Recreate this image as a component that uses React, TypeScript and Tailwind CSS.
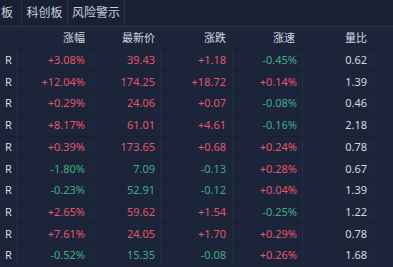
const rows = [
  ["+3.08%", "39.43", "+1.18", "-0.45%", "0.62"],
  ["+12.04%", "174.25", "+18.72", "+0.14%", "1.39"],
  ["+0.29%", "24.06", "+0.07", "-0.08%", "0.46"],
  ["+8.17%", "61.01", "+4.61", "-0.16%", "2.18"],
  ["+0.39%", "173.65", "+0.68", "+0.24%", "0.78"],
  ["-1.80%", "7.09", "-0.13", "+0.28%", "0.67"],
  ["-0.23%", "52.91", "-0.12", "+0.04%", "1.39"],
  ["+2.65%", "59.62", "+1.54", "-0.25%", "1.22"],
  ["+7.61%", "24.05", "+1.70", "+0.29%", "0.78"],
  ["-0.52%", "15.35", "-0.08", "+0.26%", "1.68"],
];

const color = (v: string) => (v.startsWith("-") ? "text-[#3fae86]" : "text-[#e5566f]");

const cols = "grid grid-cols-[16px_74px_70px_72px_70px_71px_1fr]";

export default function App() {
  return (
    <div
      className="w-[393px] h-[267px] overflow-hidden bg-[#1b2438] text-[11px]"
      style={{ fontFamily: '"Noto Sans", "Noto Sans CJK SC", sans-serif' }}
    >
      <div className="flex h-[27px] bg-[#182133] border-b border-[#2a3449] text-[12px] text-[#c9cfda]">
        <div className="w-[22px] flex items-center border-r border-[#2a3449] pl-[1px]">板</div>
        <div className="w-[46px] flex items-center justify-center border-r border-[#2a3449]">科创板</div>
        <div className="w-[57px] flex items-center justify-center border-r border-[#2a3449]">风险警示</div>
        <div className="flex-1" />
      </div>
      <div className={`${cols} h-[22px] items-center text-[#d4d9e2]`}>
        <div />
        <div className="text-right pr-[5px]">涨幅</div>
        <div className="text-right pr-[5px]">最新价</div>
        <div className="text-right pr-[6px]">涨跌</div>
        <div className="text-right pr-[7px]">涨速</div>
        <div className="text-right pr-[6px]">量比</div>
        <div />
      </div>
      {rows.map((r, i) => (
        <div key={i} className={`${cols} h-[21.7px] items-center border-t border-[#172032]`}>
          <div className="pl-[5px] text-[#d4d9e2] h-full flex items-center">R</div>
          <div className={`text-right pr-[5px] h-full flex items-center justify-end border-l border-[#222c41] ${color(r[0])}`}>{r[0]}</div>
          <div className={`text-right pr-[5px] h-full flex items-center justify-end border-l border-[#222c41] ${color(r[0])}`}>{r[1]}</div>
          <div className={`text-right pr-[6px] h-full flex items-center justify-end border-l border-[#222c41] ${color(r[2])}`}>{r[2]}</div>
          <div className={`text-right pr-[5px] h-full flex items-center justify-end border-l border-[#222c41] ${color(r[3])}`}>{r[3]}</div>
          <div className="text-right pr-[6px] h-full flex items-center justify-end border-l border-[#222c41] text-[#d4d9e2]">{r[4]}</div>
          <div className="h-full border-l border-[#222c41]" />
        </div>
      ))}
    </div>
  );
}
